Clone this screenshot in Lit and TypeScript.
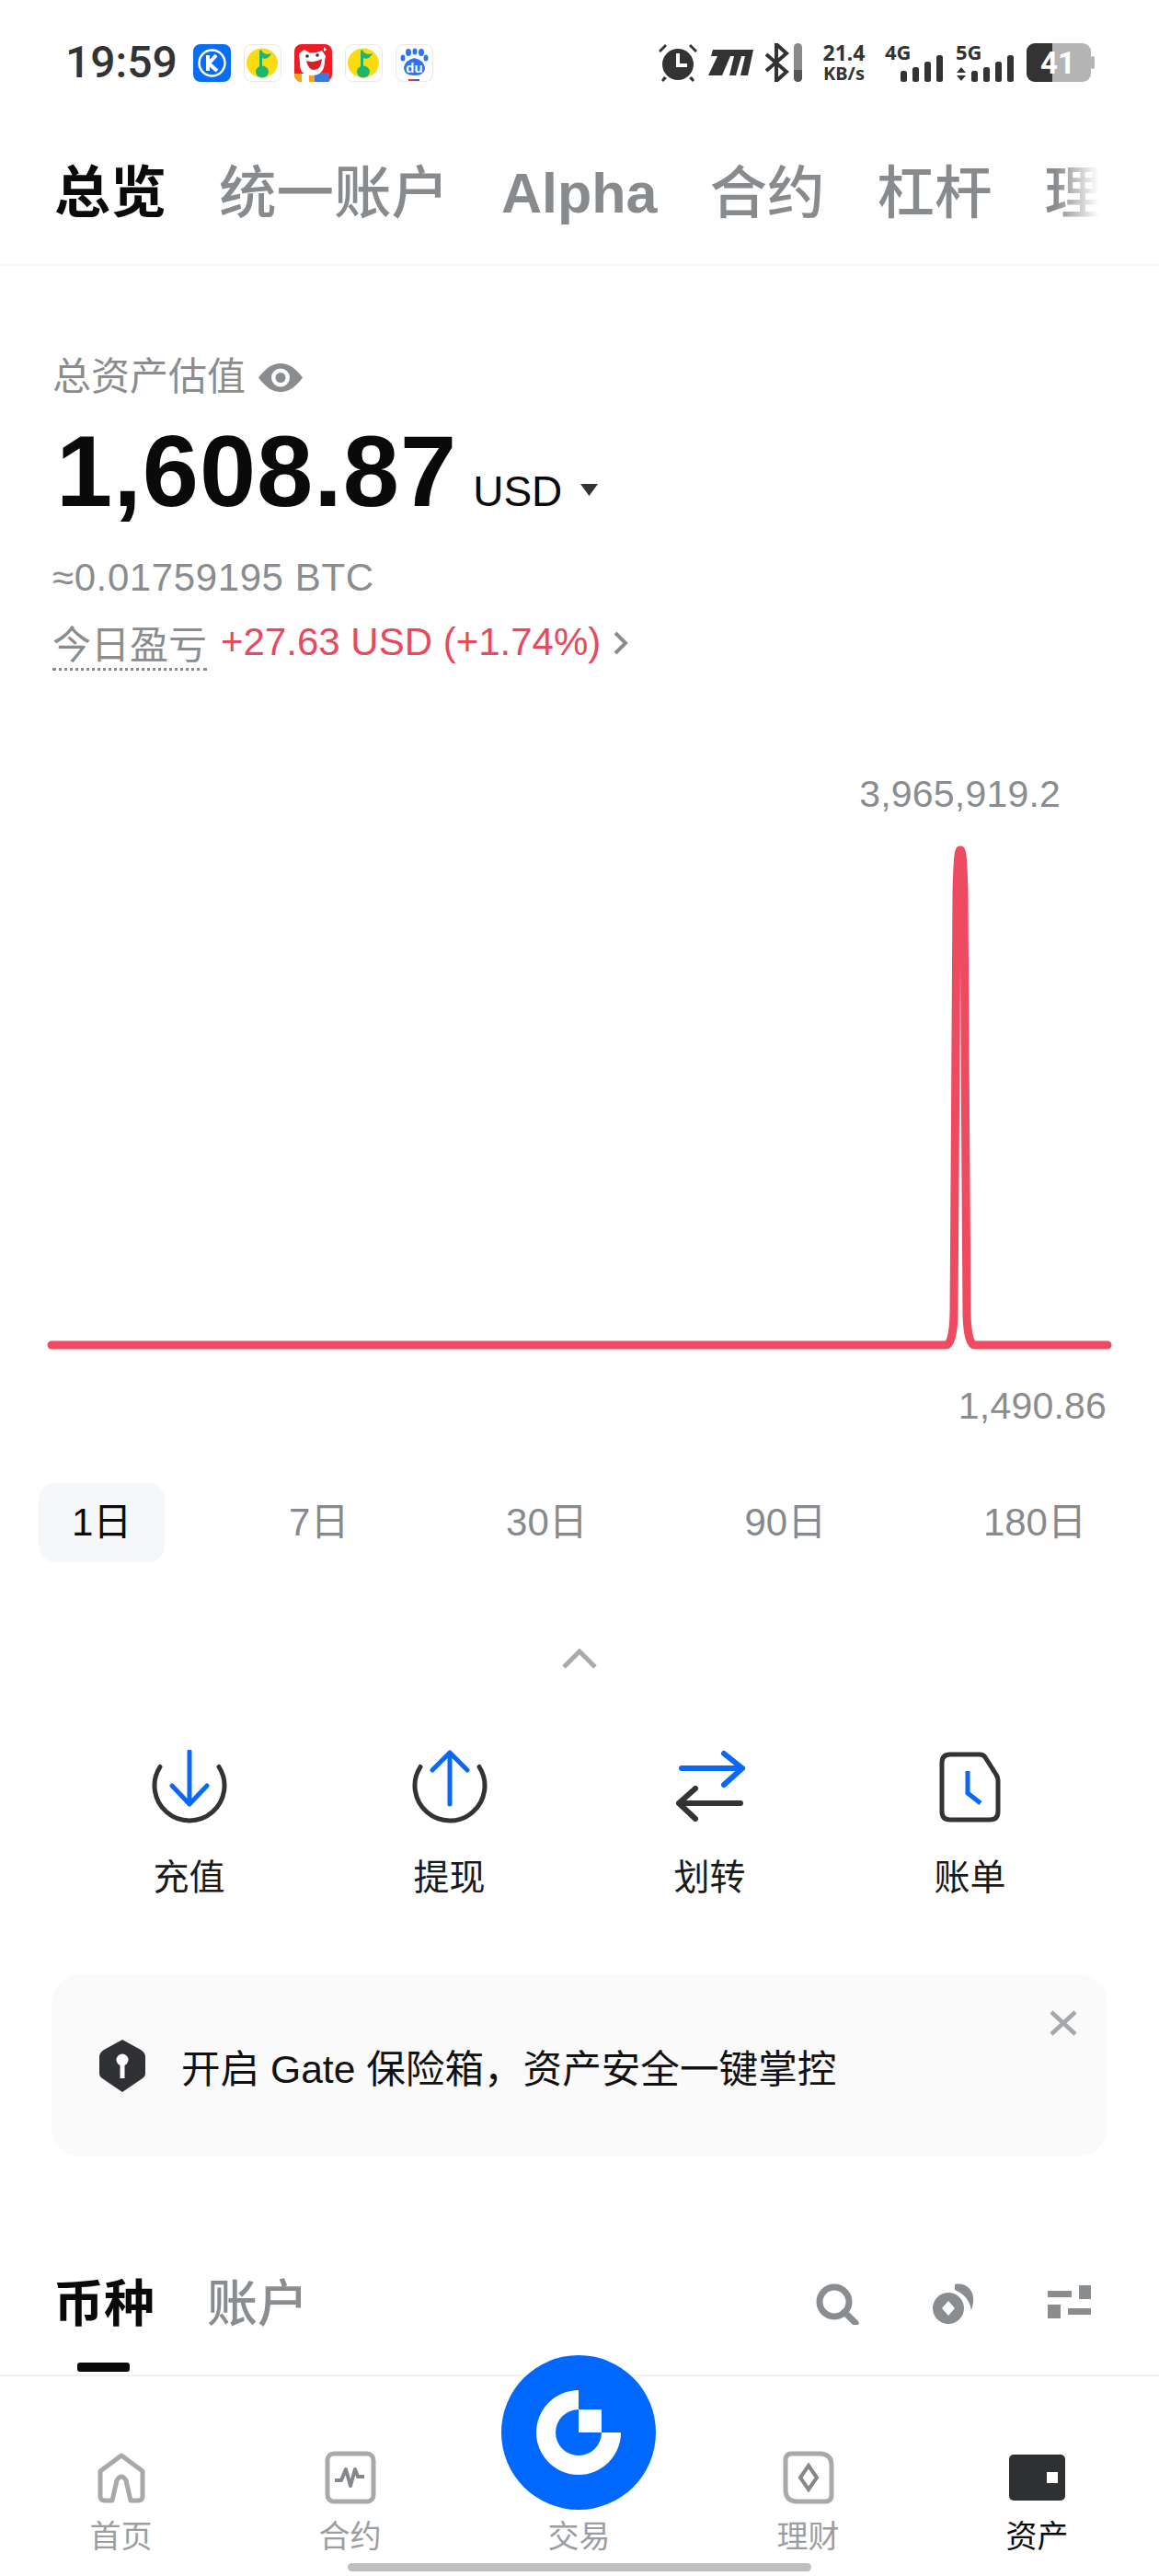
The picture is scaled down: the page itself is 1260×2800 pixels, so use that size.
import { LitElement, html, css, svg } from "lit";
import { customElement } from "lit/decorators.js";

const qq = html`<svg class="app" viewBox="0 0 41 41"><rect x=".5" y=".5" width="40" height="40" rx="8" fill="#fff" stroke="#e8e8e8"/><ellipse cx="20" cy="20.500" rx="17" ry="16" fill="#fedb10"/><path d="M17 30V7l2-1c1 4 6 6 11 4-2 5-7 7-10 5v15z" fill="#1fb56f"/><ellipse cx="20" cy="30" rx="7" ry="6.500" fill="#1fb56f"/></svg>`;

const NAV = [
  { label: "首页", icon: svg`<path transform="translate(3 2)" d="M5 20 28 3l23 17v27q0 5-5 5h-8l-5-22q-5-8-10 0l-5 22h-8q-5 0-5-5z" fill="none" stroke="#a7a9ab" stroke-width="5" stroke-linejoin="round"/>` },
  { label: "合约", icon: svg`<g transform="translate(3 0)"><rect x="3" y="3" width="50" height="52" rx="7" fill="none" stroke="#a7a9ab" stroke-width="5"/><path d="M11 32h7l5-12 5 18 5-18 3 8h7" fill="none" stroke="#85888b" stroke-width="4" stroke-linejoin="round"/></g>` },
  { label: "交易", icon: null },
  { label: "理财", icon: svg`<g transform="translate(3 0)"><path d="M10 3h30q13 0 13 13v32q0 7-7 7H16q-13 0-13-13V10q0-7 7-7z" fill="none" stroke="#a7a9ab" stroke-width="5"/><path d="M28 16l9 13-9 13-9-13z" fill="none" stroke="#85888b" stroke-width="4"/></g>` },
  { label: "资产", icon: svg`<rect x="0" y="4" width="61" height="50" rx="5" fill="#2f3032"/><rect x="41" y="23" width="12" height="12" fill="#fff"/>`, active: true },
];

@customElement("app-root")
export class AppRoot extends LitElement {
  static styles = css`
    :host { display: block; width: 1260px; height: 2800px; overflow: hidden; background: #fff; font-family: "Liberation Sans", "Noto Sans CJK SC", sans-serif; color: #0a0a0a; }
    svg { display: block; flex: none; }
    .status { display: flex; align-items: center; height: 42px; padding: 47px 70px 0 71px; }
    .time { font: 500 48px/42px Roboto, sans-serif; color: #333; width: 139px; }
    .apps { display: flex; gap: 14px; }
    .app { width: 41px; height: 41px; }
    .sys { display: flex; align-items: center; margin-left: auto; color: #333; }
    .alarm { width: 44px; height: 42px; margin-right: 11px; }
    .mi { width: 49px; height: 28px; margin-right: 12px; }
    .bt { width: 27px; height: 42px; margin-right: 4px; }
    .vol { width: 11px; height: 42px; margin-right: 20px; }
    .speed { width: 49px; margin-right: 20px; font: 700 23px/23px "Noto Sans", sans-serif; text-align: center; white-space: nowrap; }
    .speed div + div { font-size: 20px; line-height: 21px; }
    .net { width: 64px; height: 42px; margin-right: 13px; overflow: visible; }
    .net text { font: 700 22px "Noto Sans", sans-serif; fill: #333; }
    .batt { width: 74px; height: 42px; }
    .batt text { font: 700 33px Roboto, sans-serif; fill: #fff; }

    .tabs { display: flex; align-items: center; gap: 57px; height: 154px; padding: 44px 0 0 59px; border-bottom: 2px solid #f6f6f6; font-size: 62.500px; line-height: 70px; color: #888b8e; white-space: nowrap; overflow: hidden; }
    .tab { font-weight: 500; }
    .tab.on { font-weight: 700; color: #0a0a0a; font-size: 61px; }
    .tab.lat { font-weight: 700; font-size: 61px; }
    .tab.fade { width: 60px; flex: none; -webkit-mask-image: linear-gradient(to right, #000 20%, transparent 100%); mask-image: linear-gradient(to right, #000 20%, transparent 100%); }

    .summary { padding: 97px 0 0 57px; color: #8a8d90; font-size: 42px; line-height: 48px; }
    .lbl { display: flex; align-items: center; gap: 14px; height: 48px; }
    .eye { width: 48px; height: 31px; }
    .amt { display: flex; align-items: baseline; margin: 24px 0 0 4px; height: 108px; color: #0a0a0a; }
    .big { font-size: 110px; line-height: 108px; font-weight: 700; letter-spacing: 1px; }
    .unit { font-size: 46px; margin-left: 17px; line-height: 48px; }
    .caret { width: 19px; height: 13px; margin-left: 20px; align-self: center; position: relative; top: 20px; }
    .btc { margin-top: 38px; letter-spacing: .6px; }
    .pnl { display: flex; align-items: flex-start; margin-top: 22px; }
    .dot { margin: 4px 15px 0 0; border-bottom: 3px dotted #8a8d90; }
    .up { color: #e8495f; }
    .chev { width: 18px; height: 28px; margin: 11px 0 0 13px; }

    .peak, .low { font-size: 41px; line-height: 48px; color: #8a8d90; text-align: right; letter-spacing: .2px; }
    .peak { margin-top: 110px; padding-right: 107px; }
    .low { margin-top: 25px; padding-right: 57px; }
    .chart { width: 1260px; height: 590px; margin-top: 2px; }

    .ranges { display: flex; justify-content: space-between; padding: 0 43px 0 42px; margin-top: 60px; font-size: 42px; color: #868a8d; }
    .range { padding: 0 36px; height: 86px; line-height: 86px; border-radius: 18px; white-space: nowrap; }
    .range.on { background: #f5f7f8; color: #0a0a0a; }
    .more { width: 40px; height: 22px; margin: 94px auto 0; }

    .actions { display: grid; grid-template-columns: repeat(4, 283px); padding-left: 64px; margin-top: 88px; }
    .act { display: flex; flex-direction: column; align-items: center; }
    .act svg { width: 84px; height: 80px; }
    .act span { margin-top: 35px; font-size: 39px; line-height: 48px; color: #1a1a1a; }

    .banner { position: relative; display: flex; align-items: center; gap: 39px; height: 198px; margin: 81px 56px 0; padding-left: 52px; border-radius: 32px; background: #fafafa; font-size: 42.600px; color: #111; white-space: nowrap; }
    .shield { width: 50px; height: 57px; }
    .close { position: absolute; right: 33px; top: 39px; width: 30px; height: 28px; }

    .assets { display: flex; align-items: center; height: 60px; margin-top: 130px; padding: 0 74px 0 58px; font-size: 55px; line-height: 60px; color: #8a8d90; }
    .assets b { color: #0a0a0a; margin-right: 57px; }
    .assets span { font-weight: 500; }
    .tools { display: flex; align-items: center; margin-left: auto; }
    .tools svg { width: 48px; height: 46px; }
    .tools svg + svg { margin-left: 79px; }
    .tools svg + svg + svg { margin-left: 77px; }
    .bar { width: 57px; height: 10px; margin: 34px 0 0 84px; border-radius: 3px; background: #0a0a0a; }

    .nav { position: relative; margin-top: 3px; border-top: 2px solid #f2f2f2; display: grid; grid-template-columns: repeat(5, 249px); padding: 81px 0 0 7px; }
    .item { display: flex; flex-direction: column; align-items: center; font-size: 34px; line-height: 40px; color: #9b9ea0; }
    .item.on { color: #0a0a0a; }
    .slot { height: 58px; margin-bottom: 15px; }
    .slot svg { width: 61px; height: 58px; }
    .fab { position: absolute; left: 545px; top: -23px; width: 168px; height: 168px; }
    .home { grid-column: 1 / -1; width: 504px; height: 9px; margin: 9px 0 0 371px; border-radius: 5px; background: #bfbfbf; }
  `;

  render() {
    return html`
      <div class="status">
        <div class="time">19:59</div>
        <div class="apps">
          <svg class="app" viewBox="0 0 41 41"><rect width="41" height="41" rx="8" fill="#0a6cf0"/><circle cx="20.500" cy="20.500" r="14" fill="none" stroke="#fff" stroke-width="2.500"/><path d="M16 12v17M25 12l-8 9 9 8" fill="none" stroke="#fff" stroke-width="4"/></svg>
          ${qq}
          <svg class="app" viewBox="0 0 41 41"><rect width="41" height="41" rx="8" fill="#ee1c25"/><path d="M0 32h22v9H8a8 8 0 0 1-8-8z" fill="#f5a623"/><rect x="8" y="32" width="8" height="9" fill="#fff"/><rect x="22" y="31" width="16" height="10" rx="1" fill="#3a7bd5"/><path d="M5 10l6-4 5 3h8l6-2 4 6-1 5q0 16-14 16T6 20z" fill="#fff"/><path d="M13 18q8 3 17-2-1 12-8 12t-9-10z" fill="#d8202a"/><circle cx="14" cy="13" r="1.800" fill="#333"/><circle cx="25" cy="12" r="1.800" fill="#333"/><path d="M32 3l3 3-3 2z" fill="#fff"/></svg>
          ${qq}
          <svg class="app" viewBox="0 0 41 41"><rect x=".5" y=".5" width="40" height="40" rx="8" fill="#fff" stroke="#e8e8e8"/><g fill="#2f74ee"><ellipse cx="14" cy="9" rx="3" ry="4"/><ellipse cx="21" cy="8" rx="2.500" ry="3.500"/><ellipse cx="28" cy="9" rx="3" ry="4"/><ellipse cx="8" cy="15" rx="2.500" ry="3.500"/><ellipse cx="33" cy="15" rx="2.500" ry="3.500"/><path d="M9 25q2-8 11.500-10Q30 17 32 25q0 9-11.500 9T9 25z"/></g><text x="20.500" y="31" text-anchor="middle" font-size="15" font-weight="700" fill="#fff" font-family="Liberation Sans">du</text><rect x="14" y="38" width="6" height="2" fill="#e33"/><rect x="20" y="38" width="6" height="2" fill="#36c"/></svg>
        </div>
        <div class="sys">
          <svg class="alarm" viewBox="0 0 44 42" fill="#333"><circle cx="22" cy="23" r="17"/><path d="M1 8l7-7 2 2-7 7zM43 8l-7-7-2 2 7 7zM7 36l-3 4 2 2 4-4zM37 36l3 4-2 2-4-4z"/><path d="M20 11h4v11h8v4H20z" fill="#fff"/></svg>
          <svg class="mi" viewBox="0 0 49 28" fill="#333"><path d="M5 0h44l-6 28h-8l5-21h-4l-6 21h-7l5-21h-4L15 28H0L10 7H3z"/></svg>
          <svg class="bt" viewBox="0 0 27 42"><path d="M2 12l22 19-11 10V1l11 10L2 30" fill="none" stroke="#333" stroke-width="4"/></svg>
          <svg class="vol" viewBox="0 0 11 42"><rect x="1" width="9" height="42" rx="4.500" fill="#8a8a8a"/><path d="M1 29h9v8.500a4.500 4.500 0 0 1-9 0z" fill="#555"/></svg>
          <div class="speed"><div>21.4</div><div>KB/s</div></div>
          <svg class="net" viewBox="0 0 64 42"><text x="0" y="18">4G</text><g fill="#333"><rect x="17" y="30" width="7" height="12" rx="2.500"/><rect x="30" y="26" width="7" height="16" rx="2.500"/><rect x="43" y="20" width="7" height="22" rx="2.500"/><rect x="56" y="13" width="7" height="29" rx="2.500"/></g></svg>
          <svg class="net" viewBox="0 0 64 42"><text x="0" y="18">5G</text><g fill="#333"><path d="M1 32l5-6 5 6zM1 35l5 6 5-6z"/><rect x="17" y="30" width="7" height="12" rx="2.500"/><rect x="30" y="26" width="7" height="16" rx="2.500"/><rect x="43" y="20" width="7" height="22" rx="2.500"/><rect x="56" y="13" width="7" height="29" rx="2.500"/></g></svg>
          <svg class="batt" viewBox="0 0 74 42"><rect width="70" height="42" rx="9" fill="#b4b4b4"/><rect x="70" y="14" width="4" height="14" rx="2" fill="#b4b4b4"/><path d="M9 0h19v42H9a9 9 0 0 1-9-9V9a9 9 0 0 1 9-9z" fill="#333"/><text x="34" y="33" text-anchor="middle">41</text></svg>
        </div>
      </div>

      <div class="tabs">
        <span class="tab on">总览</span><span class="tab">统一账户</span><span class="tab lat">Alpha</span><span class="tab">合约</span><span class="tab">杠杆</span><span class="tab fade">理</span>
      </div>

      <div class="summary">
        <div class="lbl">总资产估值
          <svg class="eye" viewBox="0 0 48 31"><path d="M0 15.500C8 5 15 0 24 0s16 5 24 15.500C40 26 33 31 24 31S8 26 0 15.500z" fill="#8a8d90"/><circle cx="24" cy="15.500" r="10" fill="#fff"/><circle cx="24" cy="15.500" r="5.500" fill="#8a8d90"/></svg>
        </div>
        <div class="amt"><span class="big">1,608.87</span><span class="unit">USD</span>
          <svg class="caret" viewBox="0 0 19 13"><path d="M0 0h19l-9.500 13z" fill="#333"/></svg>
        </div>
        <div class="btc">≈0.01759195 BTC</div>
        <div class="pnl"><span class="dot">今日盈亏</span><span class="up">+27.63 USD (+1.74%)</span>
          <svg class="chev" viewBox="0 0 18 28"><path d="M3 3l11 11L3 25" fill="none" stroke="#8a8d90" stroke-width="4"/></svg>
        </div>
      </div>

      <div class="peak">3,965,919.2</div>
      <svg class="chart" viewBox="0 0 1260 590"><path d="M56 573H1028q8 0 9-33c2-140 1-340 3-460 1-35 2-45 4-45s3 10 4 45c2 120 1 320 3 460q1 33 9 33H1204" fill="none" stroke="#ee4a60" stroke-width="9" stroke-linecap="round" stroke-linejoin="round"/></svg>
      <div class="low">1,490.86</div>

      <div class="ranges">
        <span class="range on">1日</span><span class="range">7日</span><span class="range">30日</span><span class="range">90日</span><span class="range">180日</span>
      </div>

      <svg class="more" viewBox="0 0 40 22"><path d="M3 20 20 3l17 17" fill="none" stroke="#aaa" stroke-width="5"/></svg>

      <div class="actions">
        <div class="act"><svg viewBox="0 0 84 80"><path d="M10 18.500A38 38 0 1 0 74 18.500" fill="none" stroke="#333" stroke-width="5" stroke-linecap="round"/><path d="M42 2v56M23 39l19 20 19-20" fill="none" stroke="#0a68f4" stroke-width="5" stroke-linecap="round" stroke-linejoin="round"/></svg><span>充值</span></div>
        <div class="act"><svg viewBox="0 0 84 80"><path d="M10 18.500A38 38 0 1 0 74 18.500" fill="none" stroke="#333" stroke-width="5" stroke-linecap="round"/><path d="M42 3v56M23 22 42 3l19 19" fill="none" stroke="#0a68f4" stroke-width="5" stroke-linecap="round" stroke-linejoin="round"/></svg><span>提现</span></div>
        <div class="act"><svg viewBox="0 0 84 80"><path d="M11 20h66M57 4l20 16-20 18" fill="none" stroke="#0a68f4" stroke-width="6" stroke-linecap="round" stroke-linejoin="round"/><path d="M75 58H8M26 42 8 58l18 17" fill="none" stroke="#333" stroke-width="6" stroke-linecap="round" stroke-linejoin="round"/></svg><span>划转</span></div>
        <div class="act"><svg viewBox="0 0 84 80"><path d="M20 5h32q4 0 6 3l12 19q2 3 2 6v34q0 9-9 9H20q-9 0-9-9V14q0-9 9-9z" fill="none" stroke="#333" stroke-width="5"/><path d="M39 23v24l14 11" fill="none" stroke="#0a68f4" stroke-width="5"/></svg><span>账单</span></div>
      </div>

      <div class="banner">
        <svg class="shield" viewBox="0 0 50 57"><path d="M25 0 45 11q5 3 5 8v18q0 3-3 5L25 57 3 42q-3-2-3-5V19q0-5 5-8z" fill="#303134"/><circle cx="25" cy="22" r="6.500" fill="#fff"/><rect x="22.500" y="24" width="5" height="18" fill="#fff"/></svg>
        <span>开启 Gate 保险箱，资产安全一键掌控</span>
        <svg class="close" viewBox="0 0 30 28"><path d="M2 2l26 24M28 2 2 26" fill="none" stroke="#a5a8aa" stroke-width="4.500"/></svg>
      </div>

      <div class="assets">
        <b>币种</b><span>账户</span>
        <div class="tools">
          <svg viewBox="0 0 48 46"><circle cx="21" cy="21" r="16" fill="none" stroke="#8a8d90" stroke-width="7"/><path d="M32 32l12 12" stroke="#8a8d90" stroke-width="7" stroke-linecap="round"/></svg>
          <svg viewBox="0 0 48 46"><circle cx="18" cy="28" r="17" fill="#8a8d90"/><path d="M18 20l7 8-7 8-7-8z" fill="#fff"/><path d="M25 2c14-3 25 9 18 28q-3-16-18-22z" fill="#8a8d90"/></svg>
          <svg viewBox="0 0 48 46" fill="#8a8d90"><rect x="1" y="9" width="26" height="7"/><rect x="35" y="3" width="13" height="15"/><rect x="1" y="24" width="14" height="15"/><rect x="23" y="28" width="25" height="7"/></svg>
        </div>
      </div>
      <div class="bar"></div>

      <div class="nav">
        ${NAV.map((n) => html`<div class="item ${n.active ? "on" : ""}"><div class="slot">${n.icon ? html`<svg viewBox="0 0 61 58">${n.icon}</svg>` : ""}</div>${n.label}</div>`)}
        <div class="home"></div>
        <svg class="fab" viewBox="0 0 168 168"><circle cx="84" cy="84" r="84" fill="#0068ff"/><path d="M84 38a46 46 0 1 0 46 46h-21a25 25 0 1 1-25-25zM84 59h25v25H84z" fill="#fff"/></svg>
      </div>
    `;
  }
}
